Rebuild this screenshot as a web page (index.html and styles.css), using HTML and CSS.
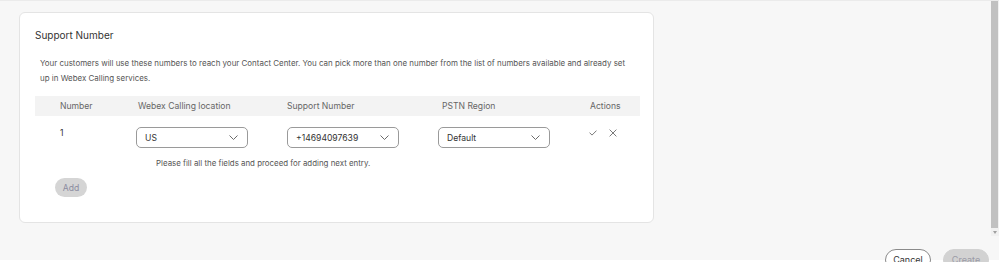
FILE: index.html
```html
<!DOCTYPE html>
<html lang="en">
<head>
<meta charset="utf-8">
<title>Support Number</title>
<link rel="stylesheet" href="styles.css">
</head>
<body>
<div class="scroll-area">
  <div class="content">
    <section class="card">
      <h2 class="card-title">Support Number</h2>
      <p class="desc">Your customers will use these numbers to reach your Contact Center. You can pick more than one number from the list of numbers available and already set up in Webex Calling services.</p>
      <div class="table">
        <div class="thead">
          <div class="th c1">Number</div>
          <div class="th c2">Webex Calling location</div>
          <div class="th c3">Support Number</div>
          <div class="th c4">PSTN Region</div>
          <div class="th c5">Actions</div>
        </div>
        <div class="trow">
          <div class="td c1 num">1</div>
          <div class="td c2"><div class="select"><span>US</span><svg class="chev" viewBox="0 0 9 5" width="9" height="5"><path d="M0.5 0.5 L4.5 4.5 L8.5 0.5" fill="none" stroke="#6b6b6b" stroke-width="1"/></svg></div></div>
          <div class="td c3"><div class="select"><span>+14694097639</span><svg class="chev" viewBox="0 0 9 5" width="9" height="5"><path d="M0.5 0.5 L4.5 4.5 L8.5 0.5" fill="none" stroke="#6b6b6b" stroke-width="1"/></svg></div></div>
          <div class="td c4"><div class="select"><span>Default</span><svg class="chev" viewBox="0 0 9 5" width="9" height="5"><path d="M0.5 0.5 L4.5 4.5 L8.5 0.5" fill="none" stroke="#6b6b6b" stroke-width="1"/></svg></div></div>
          <div class="td c5 actions">
            <svg viewBox="0 0 8 6" width="8" height="6"><path d="M0.5 2.6 L3 5.1 L7.5 0.6" fill="none" stroke="#7a7a7a" stroke-width="1"/></svg>
            <svg viewBox="0 0 8 8" width="8" height="8"><path d="M0.6 0.6 L7.4 7.4 M7.4 0.6 L0.6 7.4" fill="none" stroke="#7a7a7a" stroke-width="1"/></svg>
          </div>
        </div>
        <p class="hint">Please fill all the fields and proceed for adding next entry.</p>
      </div>
      <button class="btn-add" type="button">Add</button>
    </section>
  </div>
  <div class="scrollbar">
    <div class="thumb"></div>
    <div class="arrow"></div>
  </div>
</div>
<footer class="footer">
  <button class="btn btn-cancel" type="button">Cancel</button>
  <button class="btn btn-create" type="button">Create</button>
</footer>
</body>
</html>
```

FILE: styles.css
```css
* { box-sizing: border-box; }
html, body { margin: 0; padding: 0; }
body {
  width: 999px;
  height: 262px;
  overflow: hidden;
  background: #f7f7f7;
  font-family: Inter, "Noto Sans", sans-serif;
  color: #333;
  border-top: 1px solid #ebebeb;
}
.scroll-area {
  display: flex;
  height: 235px;
}
.content {
  flex: 1;
  padding: 11px 0 0 19px;
}
.card {
  width: 635px;
  height: 211px;
  background: #fff;
  border: 1px solid #e4e4e4;
  border-radius: 6px;
  padding: 15px 0 0 15px;
}
.card-title {
  margin: 0;
  font-size: 10px;
  line-height: 14px;
  font-weight: 400;
  color: #333;
}
.desc {
  margin: 14px 0 0 5px;
  width: 590px;
  font-size: 7.95px;
  line-height: 15px;
  color: #555;
}
.table {
  margin-top: 10px;
  width: 605px;
}
.thead, .trow {
  display: grid;
  grid-template-columns: 101px 151px 151px 152px 50px;
}
.thead {
  height: 20px;
  background: #f3f3f3;
  align-items: center;
  font-size: 8.6px;
  color: #666;
}
.th.c1 { padding-left: 25px; }
.th.c2 { padding-left: 2px; }
.th.c4 { padding-left: 4px; }
.th.c5 { padding-left: 0; }
.trow {
  padding-top: 11px;
  align-items: start;
}
.num {
  padding-left: 25px;
  font-size: 8.5px;
  color: #333;
  line-height: 12px;
}
.select {
  width: 112px;
  height: 21px;
  border: 1px solid #9a9a9a;
  border-radius: 5px;
  display: flex;
  align-items: center;
  justify-content: space-between;
  padding: 0 9px 0 8px;
  font-size: 8.6px;
  color: #333;
  background: #fff;
}
.chev { display: block; }
.actions {
  display: flex;
  gap: 12px;
  align-items: center;
  margin-left: -1px;
  padding-top: 2px;
}
.actions svg { display: block; }
.hint {
  margin: 9px 0 0 121px;
  font-size: 7.9px;
  line-height: 12px;
  color: #555;
}
.btn-add {
  margin: 9px 0 0 20px;
  width: 32px;
  height: 19px;
  border: none;
  border-radius: 10px;
  background: #d5d5d5;
  color: #8c8ca0;
  font-family: inherit;
  font-size: 8.6px;
  padding: 0;
}
.scrollbar {
  width: 8px;
  background: #f1f1f1;
}
.thumb {
  width: 7px;
  height: 227px;
  background: #c1c1c1;
}
.arrow {
  margin: 3px 0 0 2px;
  width: 0;
  height: 0;
  border-left: 2px solid transparent;
  border-right: 2px solid transparent;
  border-top: 3px solid #a0a0a0;
}
.footer {
  height: 26px;
  display: flex;
  justify-content: flex-end;
  align-items: flex-start;
  gap: 12px;
  padding: 13px 10px 0 0;
  background: linear-gradient(#f7f7f7 24px, #fff 24px);
  overflow: hidden;
}
.btn {
  width: 46px;
  height: 22px;
  border-radius: 11px;
  font-family: inherit;
  font-size: 9px;
  padding: 0;
  line-height: 20px;
}
.btn-cancel {
  background: #fff;
  border: 1px solid #8a8a8a;
  color: #333;
}
.btn-create {
  background: #d2d2d2;
  border: 1px solid #d2d2d2;
  color: #9a9aa6;
}
```
